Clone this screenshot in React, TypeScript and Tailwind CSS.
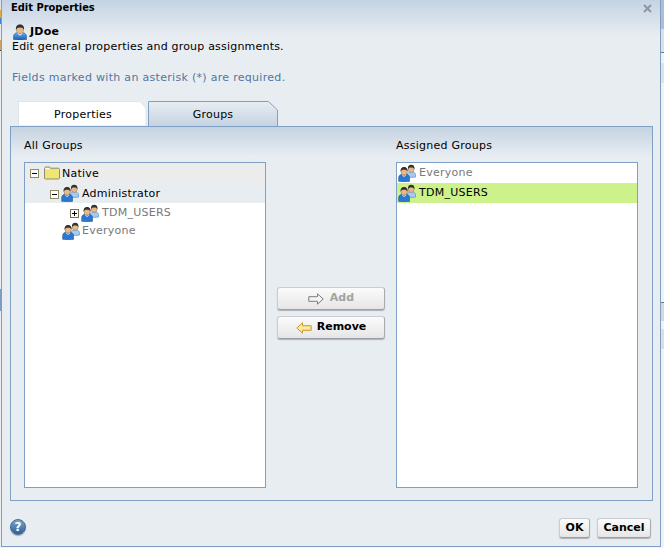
import React from "react";

const font = { fontFamily: '"DejaVu Sans", sans-serif', letterSpacing: "0.25px" };

function User({ className = "" }: { className?: string }) {
  return (
    <svg width="16" height="16" viewBox="0 0 16 16" className={className}>
      <defs>
        <linearGradient id="ub" x1="0" y1="0" x2="0" y2="1">
          <stop offset="0" stopColor="#6aa9ea" />
          <stop offset="1" stopColor="#1b5cb0" />
        </linearGradient>
      </defs>
      <path d="M1.500 15.500v-3.200c0-2.200 2-3.400 3.600-3.600h5.800c1.600.2 3.600 1.400 3.600 3.600v3.200c-2 .6-11 .6-13 0z" fill="url(#ub)" stroke="#2a5f9f" strokeWidth=".6" />
      <ellipse cx="8" cy="5.400" rx="3.600" ry="4.200" fill="#e6b98c" stroke="#8a6a4a" strokeWidth=".4" />
      <path d="M4 6C3.600 2 5.400.4 8 .4s4.400 1.600 4 5.600c-.6-1.900-1.600-2.600-4-2.600S4.600 4.100 4 6z" fill="#35312e" />
      <path d="M5.600 8.800 8 10.600l2.400-1.800v.9L8 11.800 5.600 9.700z" fill="#e9eef3" />
    </svg>
  );
}

function Group({ className = "" }: { className?: string }) {
  return (
    <svg width="18" height="18" viewBox="0 0 18 18" className={className}>
      <path d="M9 13V9.700c.5-1 1.800-1.700 2.600-1.800h3.200c1.100.2 2.700 1.100 2.700 2.500v2.600c-1.500.5-6.600.6-8.500 0z" fill="#a6cbf0" stroke="#4f86c0" strokeWidth=".6" />
      <ellipse cx="13.200" cy="4.900" rx="3" ry="3.500" fill="#e6b98c" stroke="#7d6045" strokeWidth=".4" />
      <path d="M10 5.400C9.600 2.100 11 .7 13.200.7s3.600 1.400 3.200 4.700c-.5-1.500-1.300-2-3.200-2s-2.700.5-3.200 2z" fill="#35312e" />
      <path d="M.7 17.300v-3.800c0-2 1.800-3.100 3.200-3.300h4.400c1.400.2 3.200 1.300 3.200 3.300v3.800c-1.800.6-9 .6-10.800 0z" fill="#2a78d2" stroke="#1d5297" strokeWidth=".6" />
      <ellipse cx="6.100" cy="7.400" rx="3.200" ry="3.700" fill="#e6b98c" stroke="#7d6045" strokeWidth=".4" />
      <path d="M2.700 7.800C2.300 4.300 3.800 2.900 6.100 2.900s3.800 1.400 3.400 4.900c-.5-1.500-1.400-2-3.400-2s-2.900.5-3.400 2z" fill="#35312e" />
      <path d="M4.300 10.600 6.100 12l1.800-1.400v.8L6.100 13l-1.800-1.600z" fill="#e9eef3" />
    </svg>
  );
}

function Toggle({ plus = false }: { plus?: boolean }) {
  return (
    <span className={`flex h-[9px] w-[9px] shrink-0 items-center justify-center border bg-white ${plus ? "border-[#77734f]" : "border-[#8f8b63]"}`}>
      <span className="relative block h-px w-[5px] bg-black">
        {plus && <span className="absolute left-[2px] top-[-2px] block h-[5px] w-px bg-black" />}
      </span>
    </span>
  );
}

function Folder() {
  return (
    <svg width="16" height="14" viewBox="0 0 16 14">
      <defs>
        <pattern id="dots" width="2" height="2" patternUnits="userSpaceOnUse">
          <rect width="2" height="2" fill="#fff200" />
          <rect width="1" height="1" fill="#f3ea7a" />
        </pattern>
      </defs>
      <path d="M.5 12.500V2.500c0-1 .5-1.500 1.300-1.500h3.400c.8 0 1 .5 1.300 1.200h7.700c.8 0 1.300.5 1.300 1.300v8.500c0 .6-.4 1-1 1H1.500c-.6 0-1-.4-1-.5z" fill="url(#dots)" stroke="#8f8a72" />
      <path d="M1.500 2h3.700l.5 1.200h-4.200z" fill="#fffde8" />
    </svg>
  );
}

function Arrow({ left = false, active = false }: { left?: boolean; active?: boolean }) {
  return (
    <svg width="16" height="12" viewBox="0 0 16 12">
      <path
        d={left ? "M.8 6 6.500.8v2.900h8.700v4.600H6.500v2.900z" : "M15.200 6 9.500.8v2.900H.8v4.600h8.700v2.900z"}
        fill={active ? "#fde79a" : "#f4f4f4"}
        stroke={active ? "#c99a2e" : "#7d7d7d"}
        strokeWidth="1"
        strokeLinejoin="round"
      />
    </svg>
  );
}

function Btn({ children, className = "" }: { children: React.ReactNode; className?: string }) {
  return (
    <div className={`flex items-center justify-center rounded-[3px] border border-[#c9cdd2] border-b-[#9a9ea3] border-r-[#a8acb1] bg-gradient-to-b from-[#fbfbfb] to-[#e6e6e6] text-[11px] font-bold tracking-normal shadow-[0_1px_1px_rgba(0,0,0,0.25)] ${className}`}>
      {children}
    </div>
  );
}

function Tab({ label, active = false }: { label: string; active?: boolean }) {
  const id = active ? "tabA" : "tabB";
  return (
    <div className="relative flex h-[25px] w-[130px] items-center justify-center pt-[3px]">
      <svg width="130" height="25" viewBox="0 0 130 25" className="absolute inset-0">
        <defs>
          <linearGradient id={id} x1="0" y1="0" x2="0" y2="1">
            <stop offset="0" stopColor={active ? "#ffffff" : "#e8edf2"} />
            <stop offset="1" stopColor={active ? "#ffffff" : "#c5d3e1"} />
          </linearGradient>
        </defs>
        {active ? (
          <path d="M.5 25V.500H122L128 7v18z" fill={`url(#${id})`} stroke="#dfe5ea" />
        ) : (
          <path d="M.5 25V.500H120.500L129.500 9v16" fill={`url(#${id})`} stroke="#7fa0c4" />
        )}
      </svg>
      <span className="relative">{label}</span>
    </div>
  );
}

export default function App() {
  return (
    <div className="flex h-[548px] w-[664px] overflow-hidden bg-[#f2f4f6]" style={font}>
      <div className="flex w-px shrink-0 flex-col">
        <div className="h-[10px] bg-[#dfe3e7]" />
        <div className="h-[8px] bg-[#e0a93a]" />
        <div className="h-[6px] bg-[#3f86d8]" />
        <div className="h-[16px] bg-[#e8eaec]" />
        <div className="h-[10px] bg-[#c9a36a]" />
        <div className="h-px bg-[#444]" />
        <div className="h-[238px] bg-[#eceef0]" />
        <div className="h-[22px] bg-[#7f9cc0]" />
        <div className="flex-1 bg-[#eceef0]" />
      </div>
      <div className="flex h-[547px] w-[660px] shrink-0 flex-col border-x border-b border-[#7fa0c4] bg-[#e8edf2] text-[11px] text-black">
        <div className="flex h-[36px] shrink-0 items-start justify-between bg-gradient-to-b from-[#c4d3e3] to-[#e8edf2] pl-[9px] pr-[8px] pt-[1px]">
          <span className="text-[11px] font-bold leading-[13px] tracking-normal" style={{ fontFamily: '"DejaVu Sans Condensed", "DejaVu Sans", sans-serif' }}>Edit Properties</span>
          <svg width="9" height="9" viewBox="0 0 9 9" className="mt-[3px]">
            <path d="M1 1l7 7M8 1 1 8" stroke="#8f969e" strokeWidth="2" />
          </svg>
        </div>
        <div className="mt-[-12px] flex items-center gap-[2px] pl-[10px] leading-[16px]">
          <User />
          <span className="font-bold">JDoe</span>
        </div>
        <div className="pl-[10px] leading-[14px] tracking-[0.2px]">Edit general properties and group assignments.</div>
        <div className="mt-[17px] pl-[10px] leading-[14px] tracking-[0.3px] text-[#51769f]">Fields marked with an asterisk (*) are required.</div>

        <div className="mt-[16px] flex pl-[16px]">
          <Tab label="Properties" active />
          <Tab label="Groups" />
        </div>

        <div className="ml-[8px] flex h-[375px] w-[643px] gap-[11px] border border-[#7fa0c4] bg-gradient-to-b from-[#c5d3e1] from-0% to-[#e8edf2] to-[8%] pl-[13px] pr-[14px] pt-[10px]">
          <div className="flex w-[242px] flex-col">
            <div className="h-[25px] pt-px leading-[16px]">All Groups</div>
            <div className="h-[326px] border border-[#7fa0c4] bg-white">
              <div className="flex h-[20px] items-center bg-[#ececec] pl-[5px] leading-none">
                <Toggle />
                <span className="ml-[5px]"><Folder /></span>
                <span className="ml-[2px]">Native</span>
              </div>
              <div className="flex h-[20px] items-center bg-[#e8edf2] pl-[25px] pt-[2px]">
                <Toggle />
                <Group className="ml-[2px] mt-[-2px]" />
                <span className="ml-[3px]">Administrator</span>
              </div>
              <div className="flex h-[18px] items-center pl-[45px] pt-[2px] text-[#77797b]">
                <Toggle plus />
                <Group className="ml-[2px]" />
                <span className="ml-[3px]">TDM_USERS</span>
              </div>
              <div className="flex h-[18px] items-center pl-[37px] pt-[2px] text-[#77797b]">
                <Group />
                <span className="ml-[2px]">Everyone</span>
              </div>
            </div>
          </div>

          <div className="flex w-[108px] flex-col gap-[6px] pt-[150px]">
            <Btn className="h-[23px] gap-[6px] text-[#a3a3a3]"><Arrow /><span>Add</span></Btn>
            <Btn className="h-[23px] gap-[5px]"><Arrow left active /><span>Remove</span></Btn>
          </div>

          <div className="flex w-[242px] flex-col">
            <div className="h-[25px] pt-px leading-[16px]">Assigned Groups</div>
            <div className="h-[326px] border border-[#7fa0c4] bg-white">
              <div className="flex h-[20px] items-center pl-[1px] text-[#77797b]">
                <Group />
                <span className="ml-[3px]">Everyone</span>
              </div>
              <div className="flex h-[20px] items-center bg-[#cdf28c] pl-[1px]">
                <Group />
                <span className="ml-[3px]">TDM_USERS</span>
              </div>
            </div>
          </div>
        </div>

        <div className="flex flex-1 items-start justify-between pl-[8px] pr-[9px] pt-[17px]">
          <div className="mt-px flex h-[16px] w-[16px] items-center justify-center rounded-full border border-[#3d6a99] bg-gradient-to-b from-[#7da3c9] to-[#2f6097] text-[12px] font-bold leading-none text-white shadow-[0_1px_1px_rgba(0,0,0,0.3)]">?</div>
          <div className="flex gap-[7px]">
            <Btn className="h-[20px] w-[31px]">OK</Btn>
            <Btn className="h-[20px] w-[54px]">Cancel</Btn>
          </div>
        </div>
      </div>
      <div className="flex flex-1 flex-col">
        <div className="h-[29px] bg-[#a9c0d8]" />
        <div className="h-[23px] bg-[#dde1e5]" />
        <div className="h-px bg-[#5d7f9f]" />
        <div className="h-[10px] bg-[#f0f2f4]" />
        <div className="h-[20px] bg-[#dfe4e8]" />
        <div className="h-[219px] bg-[#f0f2f4]" />
        <div className="h-px bg-[#5d7f9f]" />
        <div className="h-[18px] bg-[#d5d9dd]" />
        <div className="h-[8px] bg-[#f0f2f4]" />
        <div className="h-[20px] bg-[#d9dfe5]" />
        <div className="flex-1 bg-[#f0f2f4]" />
      </div>
    </div>
  );
}
